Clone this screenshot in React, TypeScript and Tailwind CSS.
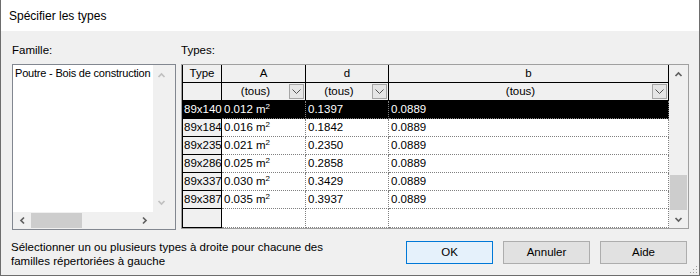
import React from 'react';

const rows = [
  ['89x140', '0.012', '0.1397', '0.0889'],
  ['89x184', '0.016', '0.1842', '0.0889'],
  ['89x235', '0.021', '0.2350', '0.0889'],
  ['89x286', '0.025', '0.2858', '0.0889'],
  ['89x337', '0.030', '0.3429', '0.0889'],
  ['89x387', '0.035', '0.3937', '0.0889'],
];

type Dir = 'up' | 'down' | 'left' | 'right';

function Arrow({ dir, color }: { dir: Dir; color: string }) {
  const pts = {
    up: '1.5,6 4.5,3 7.5,6',
    down: '1.5,3 4.5,6 7.5,3',
    left: '6,1.5 3,4.5 6,7.5',
    right: '3,1.5 6,4.5 3,7.5',
  }[dir];
  return (
    <svg width="9" height="9" viewBox="0 0 9 9">
      <polyline points={pts} fill="none" stroke={color} strokeWidth="1.7" />
    </svg>
  );
}

function DropButton() {
  return (
    <div className="w-[15px] h-[15px] border border-[#a6a6a6] bg-[#e6e6e6] flex items-center justify-center shrink-0">
      <svg width="9" height="5" viewBox="0 0 9 5">
        <polyline points="0.5,0.5 4.5,4.5 8.5,0.5" fill="none" stroke="#555" strokeWidth="1" />
      </svg>
    </div>
  );
}

function FilterCell({ w }: { w: string }) {
  return (
    <div className={`${w} h-full border-r border-b border-black bg-[#f0f0f0] flex items-center pr-[1px]`}>
      <span className="flex-1 text-center">(tous)</span>
      <DropButton />
    </div>
  );
}

function TypesGrid() {
  const dot = 'border-r border-b border-dotted border-[#808080]';
  return (
    <div className="h-[165px] border border-[#a0a0a0] flex">
      <div className="w-[487px] h-full border-l border-black flex flex-col bg-white">
        <div className="h-[18px] flex shrink-0">
          <div className="w-[39px] h-full border-r border-b border-black bg-[#f0f0f0] flex items-center justify-center">Type</div>
          <div className="w-[84px] h-full border-r border-b border-black bg-[#f0f0f0] flex items-center justify-center">A</div>
          <div className="w-[83px] h-full border-r border-b border-black bg-[#f0f0f0] flex items-center justify-center">d</div>
          <div className="w-[280px] h-full border-r border-b border-black bg-[#f0f0f0] flex items-center justify-center">b</div>
        </div>
        <div className="h-[18px] flex shrink-0">
          <div className="w-[39px] h-full border-r border-b border-black bg-[#f0f0f0]" />
          <FilterCell w="w-[84px]" />
          <FilterCell w="w-[83px]" />
          <FilterCell w="w-[280px]" />
        </div>
        {rows.map((r, i) => {
          const sel = i === 0;
          const cell = sel ? 'bg-black text-white' : 'bg-white';
          return (
            <div key={r[0]} className="h-[18px] flex shrink-0">
              <div className={`w-[39px] h-full border-r border-b border-black flex items-center pl-[1px] ${sel ? 'bg-black text-white' : 'bg-[#f0f0f0]'}`}>{r[0]}</div>
              <div className={`w-[84px] h-full ${dot} ${cell} flex items-center pl-[2px] whitespace-nowrap`}>
                <span>
                  {r[1]} m<sup className="text-[8px] leading-none top-[-0.45em]">2</sup>
                </span>
              </div>
              <div className={`w-[83px] h-full ${dot} ${cell} flex items-center pl-[2px]`}>{r[2]}</div>
              <div className={`w-[280px] h-full ${dot} ${cell} flex items-center pl-[2px]`}>{r[3]}</div>
            </div>
          );
        })}
        <div className="flex-1 flex">
          <div className="w-[39px] h-full border-r border-b border-black bg-[#f0f0f0]" />
          <div className={`w-[84px] h-full ${dot}`} />
          <div className={`w-[83px] h-full ${dot}`} />
          <div className={`w-[280px] h-full ${dot}`} />
        </div>
      </div>
      <div className="w-[19px] h-full bg-[#f0f0f0] flex flex-col items-center">
        <div className="h-[18px] flex items-center justify-center"><Arrow dir="up" color="#606060" /></div>
        <div className="flex-1 w-full flex flex-col justify-end px-[1px]">
          <div className="h-[35px] bg-[#cdcdcd]" />
        </div>
        <div className="h-[18px] flex items-center justify-center"><Arrow dir="down" color="#606060" /></div>
      </div>
    </div>
  );
}

function FamilyList() {
  return (
    <div className="h-[166px] border border-[#828790] bg-white flex flex-col">
      <div className="flex-1 flex min-h-0">
        <div className="w-[140px] overflow-hidden whitespace-nowrap pl-[2px] pt-[1px] leading-[15px] text-[11px] tracking-[-0.2px]">
          Poutre - Bois de construction
        </div>
        <div className="flex-1 bg-[#f0f0f0] flex flex-col justify-between pl-[4px] pt-[6px] pb-[5px]">
          <Arrow dir="up" color="#c0c0c0" />
          <Arrow dir="down" color="#c0c0c0" />
        </div>
      </div>
      <div className="h-[17px] flex bg-[#f0f0f0]">
        <div className="w-[140px] flex items-center">
          <div className="w-[17px] flex justify-center pl-[1px]"><Arrow dir="left" color="#606060" /></div>
          <div className="flex-1 h-full py-[1px] pl-[1px]">
            <div className="w-[51px] h-full bg-[#cdcdcd]" />
          </div>
          <div className="w-[17px] flex justify-center"><Arrow dir="right" color="#606060" /></div>
        </div>
        <div className="flex-1" />
      </div>
    </div>
  );
}

export default function App() {
  return (
    <div className="relative w-[700px] h-[276px] flex flex-col border-x border-b border-[#6d6d6d] bg-[#f0f0f0] text-black text-[11.5px] font-['Liberation_Sans',Arial,sans-serif] overflow-hidden">
      <div className="h-[31px] shrink-0 bg-white flex items-center pl-[8px] text-[12px]">Spécifier les types</div>
      <div className="flex gap-[5px] pl-[11px] pt-[12px] items-start">
        <div className="w-[164px]">
          <div className="h-[14px] leading-[14px] mb-[7px]">Famille:</div>
          <FamilyList />
        </div>
        <div className="w-[508px]">
          <div className="h-[14px] leading-[14px] mb-[7px]">Types:</div>
          <TypesGrid />
        </div>
      </div>
      <div className="flex justify-between items-start pl-[10px] pr-[12px] mt-[10px]">
        <div className="leading-[14px] whitespace-nowrap">
          Sélectionner un ou plusieurs types à droite pour chacune des
          <br />
          familles répertoriées à gauche
        </div>
        <div className="flex gap-[10px] mt-[1px]">
          <button className="w-[87px] h-[23px] border border-[#0078d7] bg-[#e5f1fb]">OK</button>
          <button className="w-[87px] h-[23px] border border-[#adadad] bg-[#e1e1e1]">Annuler</button>
          <button className="w-[87px] h-[23px] border border-[#adadad] bg-[#e1e1e1]">Aide</button>
        </div>
      </div>
      <svg className="absolute right-[1px] bottom-[1px]" width="8" height="8" viewBox="0 0 8 8">
        <rect x="6" y="0" width="1" height="1" fill="#a0a0a0" />
        <rect x="3" y="3" width="1" height="1" fill="#a0a0a0" />
        <rect x="6" y="3" width="1" height="1" fill="#a0a0a0" />
        <rect x="0" y="6" width="1" height="1" fill="#a0a0a0" />
        <rect x="3" y="6" width="1" height="1" fill="#a0a0a0" />
        <rect x="6" y="6" width="1" height="1" fill="#a0a0a0" />
      </svg>
    </div>
  );
}
